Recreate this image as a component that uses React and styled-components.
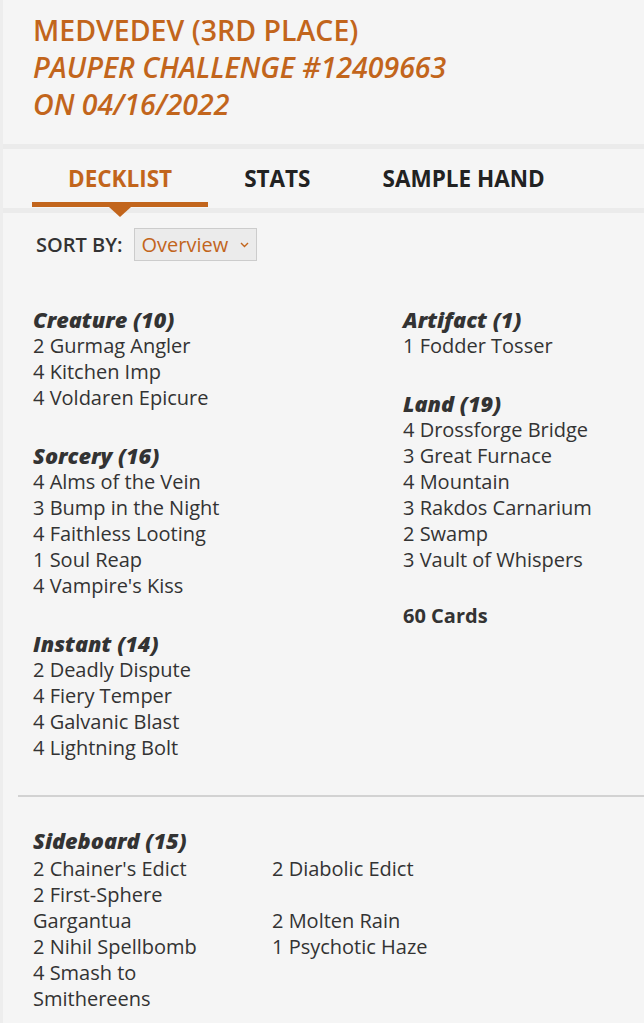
import styled, { createGlobalStyle } from 'styled-components';

// colours taken from the deck page
const col = {
    orange: '#c2651c',
    text: '#333333',
    tab: '#222222',
    bg: '#f5f5f5',
    band: '#ebebeb',
    strip: '#ededed',
    rule: '#d2d2d2',
};

const main = [
    {
        title: 'Creature (10)',
        cards: ['2 Gurmag Angler', '4 Kitchen Imp', '4 Voldaren Epicure'],
    },
    {
        title: 'Sorcery (16)',
        cards: ['4 Alms of the Vein', '3 Bump in the Night', '4 Faithless Looting', '1 Soul Reap', "4 Vampire's Kiss"],
    },
    {
        title: 'Instant (14)',
        cards: ['2 Deadly Dispute', '4 Fiery Temper', '4 Galvanic Blast', '4 Lightning Bolt'],
    },
];

const side = [
    {
        title: 'Artifact (1)',
        cards: ['1 Fodder Tosser'],
    },
    {
        title: 'Land (19)',
        cards: ['4 Drossforge Bridge', '3 Great Furnace', '4 Mountain', '3 Rakdos Carnarium', '2 Swamp', '3 Vault of Whispers'],
    },
];

const sideboard = [
    "2 Chainer's Edict",
    '2 Diabolic Edict',
    '2 First-Sphere Gargantua',
    '2 Molten Rain',
    '2 Nihil Spellbomb',
    '1 Psychotic Haze',
    '4 Smash to Smithereens',
];

const tabs = ['Decklist', 'Stats', 'Sample Hand'];

const App = () => {
    return (
        <>
            <GlobalStyle />
            <Page>
                <Header>
                    <TitleLine>Medvedev (3rd Place)</TitleLine>
                    <TitleLine italic>Pauper Challenge #12409663</TitleLine>
                    <TitleLine italic>on 04/16/2022</TitleLine>
                </Header>
                <Band />
                <TabBar>
                    {tabs.map((t, i) => (
                        <Tab key={t} active={i === 0}>{t}</Tab>
                    ))}
                </TabBar>
                <Band />
                <Body>
                    <SortRow>
                        <SortLabel>Sort by:</SortLabel>
                        <SelectBox>
                            Overview
                            <svg width="9" height="6" viewBox="0 0 9 6">
                                <path d="M1 1 L4.5 4.5 L8 1" fill="none" stroke={col.orange} strokeWidth="1.4" />
                            </svg>
                        </SelectBox>
                    </SortRow>

                    <DeckGrid>
                        <Column>
                            {main.map((s) => (
                                <Section key={s.title}>
                                    <TypeHeading>{s.title}</TypeHeading>
                                    {s.cards.map((c) => (
                                        <CardLine key={c}>{c}</CardLine>
                                    ))}
                                </Section>
                            ))}
                        </Column>
                        <Column>
                            {side.map((s) => (
                                <Section key={s.title}>
                                    <TypeHeading>{s.title}</TypeHeading>
                                    {s.cards.map((c) => (
                                        <CardLine key={c}>{c}</CardLine>
                                    ))}
                                </Section>
                            ))}
                            <Total>60 Cards</Total>
                        </Column>
                    </DeckGrid>
                </Body>

                <Divider />

                <Body>
                    <Sideboard>
                        <TypeHeading>Sideboard (15)</TypeHeading>
                        <SideList>
                            {sideboard.map((c) => (
                                <SideCard key={c}>{c}</SideCard>
                            ))}
                        </SideList>
                    </Sideboard>
                </Body>
            </Page>
        </>
    );
};

const GlobalStyle = createGlobalStyle`
body{
    margin:0;
    background-color:${col.bg};
    font-family:"Open Sans", "Liberation Sans", sans-serif;
    color:${col.text};
}
`

const Page = styled.div`
min-height:100vh;
border-left:3px solid ${col.strip};
padding-bottom:20px;
`

const Header = styled.div`
padding:12px 0 21px 30px;
`

const TitleLine = styled.div`
font-size:28.5px;
line-height:37px;
font-weight:600;
text-transform:uppercase;
color:${col.orange};
font-style:${(p) => (p.italic ? 'italic' : 'normal')};
`

const Band = styled.div`
height:5px;
background-color:${col.band};
`

const TabBar = styled.div`
display:flex;
align-items:flex-end;
padding-left:29px;
height:59px;
`

const Tab = styled.div`
position:relative;
padding:15px 36px 8px 36px;
margin-bottom:1px;
font-size:22.5px;
line-height:30px;
font-weight:700;
text-transform:uppercase;
color:${(p) => (p.active ? col.orange : col.tab)};
border-bottom:5px solid ${(p) => (p.active ? col.orange : 'transparent')};

&::after{
    content:"";
    display:${(p) => (p.active ? 'block' : 'none')};
    position:absolute;
    left:50%;
    bottom:-15px;
    margin-left:-11px;
    border-top:10px solid ${col.orange};
    border-left:11px solid transparent;
    border-right:11px solid transparent;
    z-index:2;
}
`

const Body = styled.div`
padding-left:30px;
`

const SortRow = styled.div`
display:flex;
align-items:center;
gap:11px;
padding:15px 0 0 3px;
`

const SortLabel = styled.span`
font-size:20px;
font-weight:600;
text-transform:uppercase;
color:${col.text};
`

const SelectBox = styled.div`
display:flex;
align-items:center;
gap:12px;
height:31px;
padding:0 7px 0 7px;
border:1px solid #cccccc;
background-color:#ebebeb;
font-size:20px;
color:${col.orange};
`

const DeckGrid = styled.div`
display:grid;
grid-template-columns:370px 1fr;
padding-top:45px;
`

const Column = styled.div`
display:flex;
flex-direction:column;
`

const Section = styled.div`
margin-bottom:31px;
`

const TypeHeading = styled.div`
font-size:21.7px;
line-height:27px;
font-weight:800;
font-style:italic;
color:${col.text};
`

const CardLine = styled.div`
font-size:20px;
line-height:26px;
`

const Total = styled.div`
margin-top:-1px;
font-size:20px;
line-height:26px;
font-weight:700;
`

const Divider = styled.div`
margin:3px 0 0 15px;
height:2px;
background-color:${col.rule};
`

const Sideboard = styled.div`
padding-top:30px;
`

const SideList = styled.div`
width:500px;
padding-top:2px;
`

const SideCard = styled.div`
display:inline-block;
vertical-align:baseline;
width:210px;
margin-right:29px;
font-size:20px;
line-height:26px;
`

export default App
